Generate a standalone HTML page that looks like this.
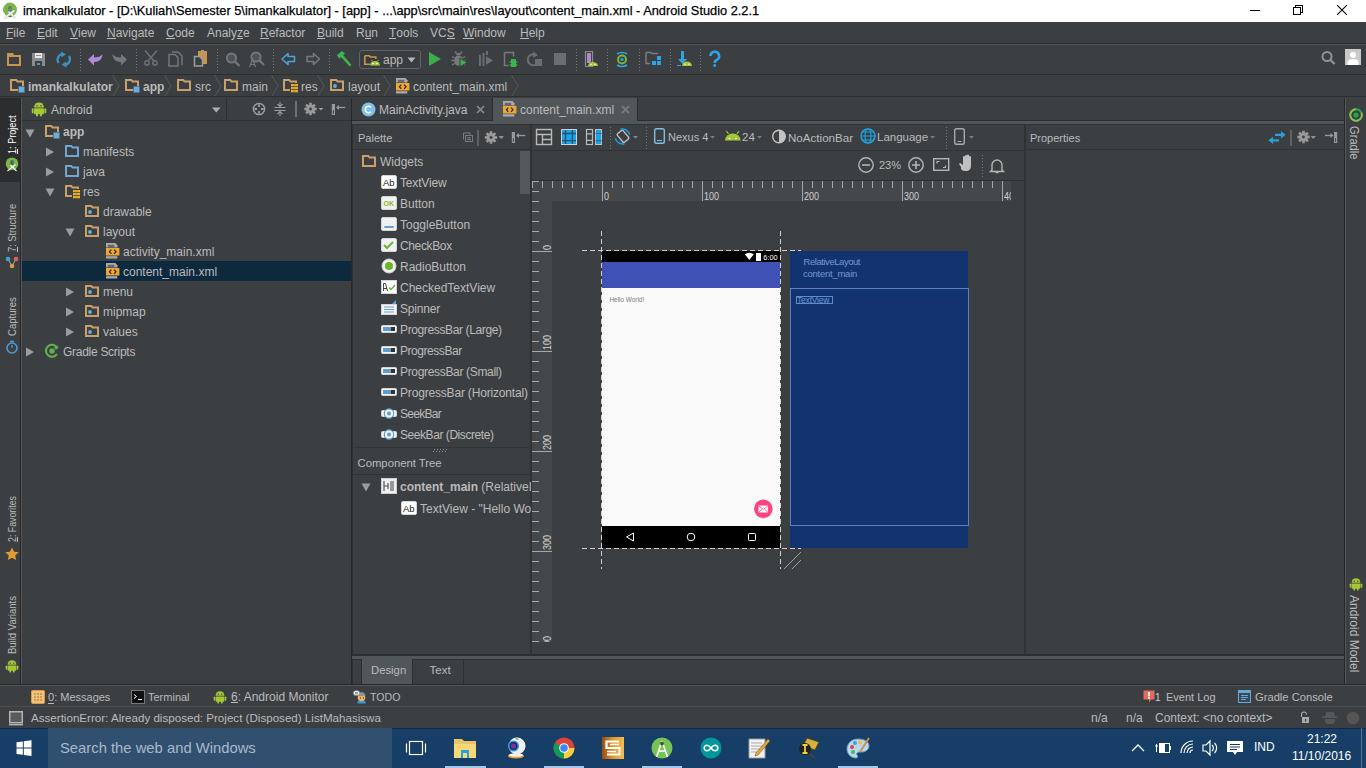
<!DOCTYPE html>
<html><head><meta charset="utf-8">
<style>
*{margin:0;padding:0;box-sizing:border-box}
html,body{width:1366px;height:768px;overflow:hidden;background:#3c3f41;font-family:"Liberation Sans",sans-serif;font-size:12px;color:#bbbbbb;position:relative}
.a{position:absolute}
.t{position:absolute;white-space:nowrap;line-height:1}
u{text-decoration:none;border-bottom:1px solid currentColor;display:inline-block;line-height:1;height:12px}
</style></head><body>
<svg width="0" height="0" style="position:absolute">
<defs>
<symbol id="fold" viewBox="0 0 16 16"><path d="M2 2h5.3l1.2 1.5H14V12H2z" fill="none" stroke="#c9a06a" stroke-width="2"/></symbol>
<symbol id="foldb" viewBox="0 0 16 16"><path d="M2 2h5.3l1.2 1.5H14V12H2z" fill="none" stroke="#6fa7d4" stroke-width="2"/></symbol>
<symbol id="foldmod" viewBox="0 0 16 16"><path d="M9 12H2V2h5.3l1.2 1.5H14V8" fill="none" stroke="#c9a06a" stroke-width="2"/><rect x="9.5" y="8.5" width="6" height="6" fill="#6aaed8"/></symbol>
<symbol id="folddot" viewBox="0 0 16 16"><path d="M2 2h5.3l1.2 1.5H14V12H2z" fill="none" stroke="#c9a06a" stroke-width="2"/><circle cx="6" cy="8" r="1.9" fill="#6aaed8"/></symbol>
<symbol id="foldres" viewBox="0 0 16 16"><path d="M8 12H2V2h5.3l1.2 1.5H14V5" fill="none" stroke="#c9a06a" stroke-width="2"/><path d="M9 6h7v2.2H9zM9 9h7v2.2H9zM9 12h7v2.2H9z" fill="#e9b52a"/><path d="M10.5 7h4M10.5 10h4M10.5 13h4" stroke="#b07c10" stroke-width=".6"/></symbol>
<symbol id="xml" viewBox="0 0 16 16"><path d="M0 0h9.3l2.2 2.2V4.6H0z" fill="#a9abad"/><rect x="1.8" y="1.8" width="6.5" height="2.8" fill="#3c3f41" opacity=".6"/><rect x="0" y="5" width="13.4" height="7.5" fill="#f0a732"/><path d="M5.3 6.6L3.4 8.75 5.3 10.9M8.1 6.6L10 8.75 8.1 10.9" fill="none" stroke="#2e2e2e" stroke-width="1.3"/><rect x="0" y="13.2" width="11.3" height="2.3" fill="#a9abad"/></symbol>
<symbol id="android" viewBox="0 0 16 16"><path d="M3 6.5a5 5 0 0 1 10 0z" fill="#a4c639"/><path d="M4.5 2.5l1.5 2M11.5 2.5l-1.5 2" stroke="#a4c639" stroke-width="1"/><rect x="3" y="7.3" width="10" height="6" rx="1" fill="#a4c639"/><rect x="0.8" y="7.3" width="1.8" height="5" rx=".9" fill="#a4c639"/><rect x="13.4" y="7.3" width="1.8" height="5" rx=".9" fill="#a4c639"/><rect x="5" y="12" width="2" height="3.5" rx="1" fill="#a4c639"/><rect x="9" y="12" width="2" height="3.5" rx="1" fill="#a4c639"/><circle cx="6" cy="4.8" r=".7" fill="#3c3f41"/><circle cx="10" cy="4.8" r=".7" fill="#3c3f41"/></symbol>
<symbol id="chev" viewBox="0 0 8 22"><path d="M0.5 0L7 11 0.5 22" fill="none" stroke="#555859" stroke-width="1"/></symbol>
<symbol id="tri-r" viewBox="0 0 10 10"><path d="M1 0.5v9l8-4.5z" fill="#9a9da0"/></symbol>
<symbol id="tri-d" viewBox="0 0 10 10"><path d="M0.5 1.5h9l-4.5 8z" fill="#9a9da0"/></symbol>
</defs>
</svg>
<!-- TITLE BAR -->
<div class="a" style="left:0;top:0;width:1366px;height:22px;background:#fff"></div>
<svg class="a" style="left:0;top:0" width="22" height="22" viewBox="0 0 22 22"><circle cx="10" cy="9.6" r="7" fill="#78b84a"/><path d="M6.5 15.5a5 3 0 0 0 7 0" stroke="#4e8a30" stroke-width="1.5" fill="none"/><path d="M14.3 10.6L4.3 18.3M8.6 11.4l6.6 6.9" stroke="#c8c8c8" stroke-width="2.2"/><path d="M14.3 10.6L4.3 18.3M8.6 11.4l6.6 6.9" stroke="#f6f6f6" stroke-width="1.2"/><rect x="8.2" y="6" width="3.6" height="5.5" rx="1.6" fill="#6b6e70"/><rect x="9.2" y="8.6" width="1.6" height="1.2" fill="#78b84a"/></svg>
<div class="t" style="left:23px;top:5px;font-size:12.8px;color:#000;-webkit-text-stroke:0.25px #000">imankalkulator - [D:\Kuliah\Semester 5\imankalkulator] - [app] - ...\app\src\main\res\layout\content_main.xml - Android Studio 2.2.1</div>
<div class="a" style="left:1250px;top:10px;width:10px;height:1px;background:#000"></div>
<div class="a" style="left:1295px;top:5px;width:8px;height:8px;border:1px solid #000;background:#fff"></div>
<div class="a" style="left:1293px;top:7px;width:8px;height:8px;border:1px solid #000;background:#fff"></div>
<svg class="a" style="left:1337px;top:5px" width="10" height="10" viewBox="0 0 10 10"><path d="M0 0L10 10M10 0L0 10" stroke="#000" stroke-width="1.05"/></svg>
<!-- MENU BAR -->
<div class="a" style="left:0;top:22px;width:1366px;height:22px;background:#3c3f41"></div>
<div class="t" style="left:6px;top:27px"><u>F</u>ile</div>
<div class="t" style="left:37px;top:27px"><u>E</u>dit</div>
<div class="t" style="left:70px;top:27px"><u>V</u>iew</div>
<div class="t" style="left:107px;top:27px"><u>N</u>avigate</div>
<div class="t" style="left:166px;top:27px"><u>C</u>ode</div>
<div class="t" style="left:207px;top:27px">Analy<u>z</u>e</div>
<div class="t" style="left:260px;top:27px"><u>R</u>efactor</div>
<div class="t" style="left:317px;top:27px"><u>B</u>uild</div>
<div class="t" style="left:356px;top:27px">R<u>u</u>n</div>
<div class="t" style="left:389px;top:27px"><u>T</u>ools</div>
<div class="t" style="left:430px;top:27px">VC<u>S</u></div>
<div class="t" style="left:463px;top:27px"><u>W</u>indow</div>
<div class="t" style="left:520px;top:27px"><u>H</u>elp</div>
<div class="a" style="left:0;top:43px;width:1366px;height:1px;background:#2a2a2a"></div><div class="a" style="left:0;top:44px;width:1366px;height:1px;background:#555555"></div>
<!-- TOOLBAR -->
<div class="a" style="left:0;top:74px;width:1366px;height:1px;background:#2c2e2f"></div>
<svg class="a" style="left:0;top:45px" width="1366" height="29" viewBox="0 45 1366 29">
<g fill="none">
<!-- open folder -->
<path d="M7 53h6l1 2h7v11H7z" fill="#c8924f"/><rect x="9" y="57" width="10" height="7" fill="#3c3f41"/>
<!-- save -->
<path d="M32 53h12l1 1v12H32z" fill="#8a8c8d"/><rect x="35" y="53" width="7" height="5" fill="#e8e8e8"/><rect x="36" y="55" width="5" height="1" fill="#8a8c8d"/><rect x="35" y="61" width="7" height="5" fill="#3c3f41"/><rect x="37" y="63" width="3" height="2" fill="#3a9bd7"/>
<!-- sync -->
<path d="M62.5 54.2A5.6 5.6 0 0 0 58.6 63" stroke="#3d8fc6" stroke-width="2.2"/><path d="M65 64.8A5.6 5.6 0 0 0 68.9 56" stroke="#3d8fc6" stroke-width="2.2"/><path d="M61 51.5l5 2.7-4.5 3.3z M66.5 67.5l-5-2.7 4.5-3.3z" fill="#3d8fc6"/>
<!-- separators -->
<g stroke="#75787a" stroke-width="1" stroke-dasharray="1 2"><path d="M80.5 49v22M136.5 49v22M217.5 49v22M273.5 49v22M329.5 49v22M576.5 49v22M607.5 49v22M639.5 49v22M670.5 49v22M700.5 49v22"/></g>
<!-- undo -->
<path d="M88 59.5l6-5.5v3.5c4 0 7-1 8.5-3.5c-0.3 5-3 8-8.5 8v3.5z" fill="#b18ad6"/>
<!-- redo -->
<path d="M88 59.5l6-5.5v3.5c4 0 7-1 8.5-3.5c-0.3 5-3 8-8.5 8v3.5z" fill="#76797b" transform="translate(215 0) scale(-1 1)"/>
<!-- cut -->
<g stroke="#6f7273" stroke-width="1.5"><circle cx="147" cy="63" r="2.2"/><circle cx="155" cy="63" r="2.2"/><path d="M145 50.5L154 61M157 50.5L148 61"/></g>
<!-- copy -->
<g stroke="#737677" stroke-width="1.5"><path d="M172 52h6l4 4v9M169 54.5h6l3 3v8.5h-9z"/></g>
<!-- paste -->
<path d="M198 51h9v13h-9z" fill="#c99450"/><rect x="201" y="50" width="3" height="2" fill="#9a9c9d"/><path d="M194.5 56.5h5l3 3v6.5h-8z" fill="#3c3f41" stroke="#9a9c9d" stroke-width="1.5"/>
<!-- find -->
<circle cx="231.5" cy="58" r="4.6" stroke="#747778" stroke-width="2" fill="#505354"/><path d="M235 61.5l4.5 4.5" stroke="#747778" stroke-width="2.4"/>
<!-- replace -->
<circle cx="256" cy="57" r="4.6" stroke="#747778" stroke-width="2" fill="#505354"/><path d="M259.5 60.5l4.5 4.5" stroke="#747778" stroke-width="2.4"/><path d="M249.5 67l3-8 3 8M250.5 64.5h4" stroke="#747778" stroke-width="1.2"/>
<!-- back -->
<path d="M282 59l6-5.5v3h6.5v5h-6.5v3z" stroke="#4ba3d9" stroke-width="1.6" stroke-linejoin="round"/>
<!-- forward -->
<path d="M319.5 59l-6-5.5v3H307v5h6.5v3z" stroke="#77797b" stroke-width="1.6" stroke-linejoin="round"/>
<!-- hammer -->
<path d="M337 55l5-4 3 2.5-2 1.5 8.5 10-1.8 1.5-8.7-9.5-2 1.8z" fill="#3eb34f"/>
<!-- run -->
<path d="M429 52v14l12-7z" fill="#3aae4a"/>
<!-- debug -->
<ellipse cx="458.5" cy="60.5" rx="4.3" ry="5.3" fill="#77797b"/><path d="M456 55a2.5 2.2 0 0 1 5 0z" fill="#77797b"/><path d="M455 51.5l1.5 2M462 51.5l-1.5 2M452 56.5l2.5 1.5M465 56.5l-2.5 1.5M451.5 60.5h3M462.5 60.5h3M452 65l2.5-1.5M465 65l-2.5-1.5" stroke="#77797b" stroke-width="1.3"/><path d="M459.5 57.5v10l8.5-5z" fill="#3c3f41"/><path d="M460.5 59v7l6-3.5z" fill="#3aae4a"/>
<!-- attach -->
<path d="M479 55h2v11h-2zM482.5 53h2v13h-2z" fill="#6b6e6f"/><path d="M486 56v9l7-4.5z" fill="#6b6e6f"/><rect x="486" y="51" width="2" height="4" fill="#6b6e6f"/>
<!-- device -->
<path d="M504.5 52.5h9v4M504.5 52.5v13h4" stroke="#77797b" stroke-width="1.5"/><path d="M511 59h5v2l2 1-2 1v1l2 1-2 1v1h-5v-1l-2-1 2-1v-1l-2-1 2-1z" fill="#38b34a"/>
<!-- rerun -->
<path d="M536 55a5.5 5.5 0 1 0 -1 10" stroke="#6b6e6f" stroke-width="2"/><path d="M533 51.5l5 3.5-5 3z" fill="#6b6e6f"/><rect x="535" y="59" width="7" height="7" fill="#6b6e6f"/>
<!-- stop -->
<rect x="554" y="53" width="12" height="12" fill="#6b6e6f"/>
<!-- AVD -->
<path d="M585.5 51.5h7v15h-7z" stroke="#8a8c8e" stroke-width="1.2"/><rect x="587" y="53" width="4" height="10" fill="#b287c4"/><path d="M588 66a5 4 0 0 1 10 0z" fill="#a4c639"/><circle cx="591" cy="64.5" r=".7" fill="#fff"/><circle cx="595" cy="64.5" r=".7" fill="#fff"/>
<!-- sync gradle -->
<path d="M617 54a7 5 0 0 1 10 0M627 65a7 5 0 0 1-10 0" stroke="#27a8e0" stroke-width="1.6"/><circle cx="622" cy="59.5" r="4" stroke="#7cb342" stroke-width="2"/><circle cx="622" cy="59.5" r="1.6" fill="#27a8e0"/>
<!-- project structure -->
<path d="M646 52.5h5l1 1h6M646 52.5v11h4" stroke="#77797b" stroke-width="1.6"/><rect x="657" y="56" width="4" height="4" fill="#28a7e6"/><rect x="652" y="61" width="4" height="4" fill="#28a7e6"/><rect x="657" y="61" width="4" height="4" fill="#28a7e6"/>
<!-- sdk -->
<path d="M681 51h3v8h3l-4.5 5-4.5-5h3z" fill="#2ea4de"/><rect x="677" y="65" width="4" height="1" fill="#2ea4de"/><path d="M682 66a5 4.5 0 0 1 10 0z" fill="#a4c639"/><circle cx="685" cy="64.2" r=".7" fill="#fff"/><circle cx="689" cy="64.2" r=".7" fill="#fff"/>
<!-- help -->
<path d="M710.5 56a4.3 4.3 0 1 1 6 4c-1.5 0.8-1.8 1.5-1.8 3" stroke="#2ea4e6" stroke-width="2.6"/><circle cx="714.7" cy="65.5" r="1.4" fill="#2ea4e6"/>
<!-- search right -->
<circle cx="1327" cy="56.5" r="4.5" stroke="#8f9294" stroke-width="2"/><path d="M1330.5 60l4 4" stroke="#8f9294" stroke-width="2.4"/>
<rect x="1345" y="49" width="16" height="16" fill="#c9c9c9"/><circle cx="1353" cy="55" r="3" fill="#fff"/><path d="M1347.5 65v-3c0-2 2-3 5.5-3s5.5 1 5.5 3v3z" fill="#fff"/>
</g>
</svg>
<!-- app dropdown -->
<div class="a" style="left:359px;top:50px;width:62px;height:19px;border:1px solid #616466;border-radius:3px;background:#3a3d3f"></div>
<svg class="a" style="left:364px;top:52px" width="16" height="16" viewBox="0 0 16 16"><path d="M0.8 3.8h4.5l1 1.2h5.5v2" stroke="#c99450" stroke-width="1.6" fill="none"/><path d="M0.8 3.8v8.5h5" stroke="#c99450" stroke-width="1.6" fill="none"/><path d="M6 13.5a5 4.5 0 0 1 10 0z" fill="#a4c639"/><circle cx="9" cy="11.5" r=".8" fill="#fff"/><circle cx="13" cy="11.5" r=".8" fill="#fff"/><path d="M7.5 8l1 1.5M14.5 8l-1 1.5" stroke="#a4c639"/></svg>
<div class="t" style="left:383px;top:54px;font-size:12px;color:#bbb">app</div>
<svg class="a" style="left:407px;top:57px" width="10" height="6" viewBox="0 0 10 6"><path d="M0.5 0.5h8l-4 5z" fill="#b5b5b5"/></svg>
<!-- NAV BAR -->
<svg class="a" style="left:9px;top:78px" width="16" height="16"><use href="#foldmod"/></svg>
<div class="t" style="left:28px;top:81px;font-weight:bold">imankalkulator</div>
<svg class="a" style="left:112px;top:75px" width="8" height="22"><use href="#chev"/></svg>
<svg class="a" style="left:124px;top:78px" width="16" height="16"><use href="#foldmod"/></svg>
<div class="t" style="left:143px;top:81px;font-weight:bold">app</div>
<svg class="a" style="left:164px;top:75px" width="8" height="22"><use href="#chev"/></svg>
<svg class="a" style="left:176px;top:78px" width="16" height="16"><use href="#fold"/></svg>
<div class="t" style="left:195px;top:81px">src</div>
<svg class="a" style="left:214px;top:75px" width="8" height="22"><use href="#chev"/></svg>
<svg class="a" style="left:223px;top:78px" width="16" height="16"><use href="#fold"/></svg>
<div class="t" style="left:242px;top:81px">main</div>
<svg class="a" style="left:271px;top:75px" width="8" height="22"><use href="#chev"/></svg>
<svg class="a" style="left:282px;top:78px" width="16" height="16"><use href="#foldres"/></svg>
<div class="t" style="left:301px;top:81px">res</div>
<svg class="a" style="left:317px;top:75px" width="8" height="22"><use href="#chev"/></svg>
<svg class="a" style="left:329px;top:78px" width="16" height="16"><use href="#folddot"/></svg>
<div class="t" style="left:348px;top:81px">layout</div>
<svg class="a" style="left:383px;top:75px" width="8" height="22"><use href="#chev"/></svg>
<svg class="a" style="left:396px;top:78px" width="16" height="16"><use href="#xml"/></svg>
<div class="t" style="left:413px;top:81px">content_main.xml</div>
<svg class="a" style="left:511px;top:75px" width="8" height="22"><use href="#chev"/></svg>
<div class="a" style="left:0;top:96px;width:1366px;height:1px;background:#2d2f30"></div>
<!-- LEFT STRIPE -->
<div class="a" style="left:0;top:98px;width:20px;height:84px;background:#2b2d2e"></div>
<div class="a" style="left:20px;top:98px;width:1px;height:586px;background:#282828"></div><div class="a" style="left:21px;top:98px;width:1px;height:586px;background:#555555"></div>
<div class="t" style="left:7px;top:154px;transform:rotate(-90deg) scaleX(0.828);transform-origin:0 0;color:#fff;font-size:11px"><span style="text-decoration:underline">1</span>: Project</div>
<svg class="a" style="left:5px;top:157px" width="14" height="15" viewBox="0 0 14 15"><circle cx="7" cy="6.8" r="6.3" fill="#78b84a"/><path d="M10.5 7.5L2.5 14M5.5 8l6 6" stroke="#f2f2f2" stroke-width="1.3"/><rect x="5.3" y="3" width="3.4" height="5" rx="1.5" fill="#5e6163"/></svg>
<div class="t" style="left:7px;top:251.5px;transform:rotate(-90deg) scaleX(0.845);transform-origin:0 0;color:#bbb;font-size:11px"><span style="text-decoration:underline">7</span>: Structure</div>
<svg class="a" style="left:5px;top:255px" width="14" height="14" viewBox="0 0 14 14"><path d="M3 4l4 7M11 4L7 11" stroke="#9aa" stroke-width="1"/><circle cx="3" cy="4" r="2.3" fill="#4a9cd6"/><circle cx="11" cy="4" r="2.3" fill="#e0605b"/><circle cx="7" cy="11" r="2.3" fill="#d89a4a"/></svg>
<div class="t" style="left:7px;top:336px;transform:rotate(-90deg) scaleX(0.868);transform-origin:0 0;color:#bbb;font-size:11px">Captures</div>
<svg class="a" style="left:5px;top:340px" width="14" height="14" viewBox="0 0 14 14"><circle cx="7" cy="8" r="5" fill="none" stroke="#4a9cd6" stroke-width="1.6"/><path d="M7 8V5M5 1.5h4" stroke="#4a9cd6" stroke-width="1.4"/></svg>
<div class="t" style="left:7px;top:542px;transform:rotate(-90deg) scaleX(0.800);transform-origin:0 0;color:#bbb;font-size:11px"><span style="text-decoration:underline">2</span>: Favorites</div>
<svg class="a" style="left:5px;top:547px" width="14" height="14" viewBox="0 0 14 14"><path d="M7 0.5l2 4.3 4.7.5-3.5 3.2 1 4.6L7 10.8 2.8 13.1l1-4.6L.3 5.3 5 4.8z" fill="#e39c34"/></svg>
<div class="t" style="left:7px;top:654px;transform:rotate(-90deg) scaleX(0.864);transform-origin:0 0;color:#bbb;font-size:11px">Build Variants</div>
<svg class="a" style="left:5px;top:659px" width="14" height="14"><use href="#android"/></svg>
<!-- PROJECT PANEL HEADER -->
<div class="a" style="left:22px;top:120px;width:330px;height:1px;background:#303234"></div>
<svg class="a" style="left:31px;top:101px" width="16" height="16"><use href="#android"/></svg>
<div class="t" style="left:51px;top:104px">Android</div>
<svg class="a" style="left:212px;top:107px" width="9" height="6" viewBox="0 0 9 6"><path d="M0 0.5h8.5l-4.25 5z" fill="#b0b0b0"/></svg>
<div class="a" style="left:226px;top:98px;width:1px;height:22px;background:#2e3031"></div>
<svg class="a" style="left:250px;top:101px" width="100" height="16" viewBox="250 101 100 16">
<g fill="none" stroke="#9c9fa1" stroke-width="1.4"><circle cx="259" cy="109" r="5.6" stroke-width="1.5"/><path d="M259 104.5v2.5M259 111v2.5M254.5 109h2.5M261 109h2.5" stroke-width="1.8"/><path d="M274.5 107.5h11M274.5 110.5h11M280 102v4M280 112v4" stroke-width="1.1"/><path d="M277.5 104l2.5 2.5 2.5-2.5M277.5 114l2.5-2.5 2.5 2.5" stroke-width="1.1"/></g>
<rect x="295" y="101" width="2" height="16" fill="#6e7173"/>
<circle cx="310.5" cy="109" r="4.4" fill="#9a9a9a"/><rect x="309.2" y="102.8" width="2.6" height="3" fill="#9a9a9a" transform="rotate(0 310.5 109)"/><rect x="309.2" y="102.8" width="2.6" height="3" fill="#9a9a9a" transform="rotate(45 310.5 109)"/><rect x="309.2" y="102.8" width="2.6" height="3" fill="#9a9a9a" transform="rotate(90 310.5 109)"/><rect x="309.2" y="102.8" width="2.6" height="3" fill="#9a9a9a" transform="rotate(135 310.5 109)"/><rect x="309.2" y="102.8" width="2.6" height="3" fill="#9a9a9a" transform="rotate(180 310.5 109)"/><rect x="309.2" y="102.8" width="2.6" height="3" fill="#9a9a9a" transform="rotate(225 310.5 109)"/><rect x="309.2" y="102.8" width="2.6" height="3" fill="#9a9a9a" transform="rotate(270 310.5 109)"/><rect x="309.2" y="102.8" width="2.6" height="3" fill="#9a9a9a" transform="rotate(315 310.5 109)"/><circle cx="310.5" cy="109" r="1.4" fill="#3c3f41"/><path d="M318.5 108h5l-2.5 2.5z" fill="#9c9fa1"/>
<rect x="331.8" y="104" width="3.2" height="11" fill="#9a9a9a"/><rect x="332.9" y="110.2" width="1" height="3.6" fill="#3c3f41"/><path d="M337 107.5h8.3" stroke="#9a9a9a" stroke-width="1.3"/><path d="M336 107.5l3-2.6v5.2z" fill="#9a9a9a"/>
</svg>
<!-- TREE -->
<div class="a" style="left:22px;top:261px;width:329px;height:20px;background:#0d293e"></div>
<svg class="a" style="left:25px;top:128px" width="10" height="10"><use href="#tri-d"/></svg>
<svg class="a" style="left:44px;top:124px" width="16" height="16"><use href="#foldmod"/></svg>
<div class="t" style="left:63px;top:126px;font-weight:bold">app</div>
<svg class="a" style="left:45px;top:147px" width="10" height="10"><use href="#tri-r"/></svg>
<svg class="a" style="left:64px;top:144px" width="16" height="16"><use href="#foldb"/></svg>
<div class="t" style="left:83px;top:146px">manifests</div>
<svg class="a" style="left:45px;top:167px" width="10" height="10"><use href="#tri-r"/></svg>
<svg class="a" style="left:64px;top:164px" width="16" height="16"><use href="#foldb"/></svg>
<div class="t" style="left:83px;top:166px">java</div>
<svg class="a" style="left:45px;top:187px" width="10" height="10"><use href="#tri-d"/></svg>
<svg class="a" style="left:64px;top:184px" width="16" height="16"><use href="#foldres"/></svg>
<div class="t" style="left:83px;top:186px">res</div>
<svg class="a" style="left:84px;top:204px" width="16" height="16"><use href="#folddot"/></svg>
<div class="t" style="left:103px;top:206px">drawable</div>
<svg class="a" style="left:65px;top:227px" width="10" height="10"><use href="#tri-d"/></svg>
<svg class="a" style="left:84px;top:224px" width="16" height="16"><use href="#folddot"/></svg>
<div class="t" style="left:103px;top:226px">layout</div>
<svg class="a" style="left:106px;top:243px" width="16" height="16"><use href="#xml"/></svg>
<div class="t" style="left:123px;top:246px">activity_main.xml</div>
<svg class="a" style="left:106px;top:263px" width="16" height="16"><use href="#xml"/></svg>
<div class="t" style="left:123px;top:266px">content_main.xml</div>
<svg class="a" style="left:65px;top:287px" width="10" height="10"><use href="#tri-r"/></svg>
<svg class="a" style="left:84px;top:284px" width="16" height="16"><use href="#folddot"/></svg>
<div class="t" style="left:103px;top:286px">menu</div>
<svg class="a" style="left:65px;top:307px" width="10" height="10"><use href="#tri-r"/></svg>
<svg class="a" style="left:84px;top:304px" width="16" height="16"><use href="#folddot"/></svg>
<div class="t" style="left:103px;top:306px">mipmap</div>
<svg class="a" style="left:65px;top:327px" width="10" height="10"><use href="#tri-r"/></svg>
<svg class="a" style="left:84px;top:324px" width="16" height="16"><use href="#folddot"/></svg>
<div class="t" style="left:103px;top:326px">values</div>
<svg class="a" style="left:25px;top:347px" width="10" height="10"><use href="#tri-r"/></svg>
<svg class="a" style="left:44px;top:343px" width="16" height="16" viewBox="0 0 16 16"><path d="M13.5 5.5A6 6 0 1 0 13 11" fill="none" stroke="#5fb04e" stroke-width="2.2"/><circle cx="8" cy="8" r="2.8" fill="#5fb04e"/><path d="M14.5 3l-2.5 4-2-3z" fill="#5fb04e"/></svg>
<div class="t" style="left:63px;top:346px;letter-spacing:-.28px">Gradle Scripts</div>
<div class="a" style="left:351px;top:98px;width:1px;height:588px;background:#282828"></div><div class="a" style="left:352px;top:98px;width:1px;height:588px;background:#303030"></div>
<!-- EDITOR TABS -->
<div class="a" style="left:352px;top:120px;width:992px;height:1px;background:#2a2c2d"></div>
<div class="a" style="left:352px;top:98px;width:141px;height:23px;background:#3b3e40;border-right:1px solid #2a2c2d;border-bottom:1px solid #2a2c2d"></div>
<div class="a" style="left:493px;top:98px;width:145px;height:23px;background:#515658;border-right:1px solid #2a2c2d"></div>
<div class="a" style="left:352px;top:121px;width:992px;height:3px;background:#515658"></div>
<div class="a" style="left:352px;top:124px;width:992px;height:1px;background:#303234"></div>
<svg class="a" style="left:361px;top:102px" width="15" height="15" viewBox="0 0 15 15"><circle cx="7.5" cy="7.5" r="7" fill="#7fc0e8"/><path d="M10 5.2A3.3 3.3 0 1 0 10 9.8" fill="none" stroke="#fff" stroke-width="1.6"/></svg>
<div class="t" style="left:379px;top:104px">MainActivity.java</div>
<svg class="a" style="left:476px;top:105px" width="9" height="9" viewBox="0 0 9 9"><path d="M1 1l7 7M8 1L1 8" stroke="#8a8c8e" stroke-width="1.6"/></svg>
<svg class="a" style="left:503px;top:101px" width="16" height="16"><use href="#xml"/></svg>
<div class="t" style="left:520px;top:104px">content_main.xml</div>
<svg class="a" style="left:621px;top:105px" width="9" height="9" viewBox="0 0 9 9"><path d="M1 1l7 7M8 1L1 8" stroke="#7d8082" stroke-width="1.6"/></svg>
<!-- PALETTE HEADER -->
<div class="t" style="left:358px;top:133px;font-size:11px">Palette</div>
<div class="a" style="left:352px;top:149px;width:179px;height:1px;background:#303234"></div>
<svg class="a" style="left:460px;top:128px" width="70" height="20" viewBox="460 128 70 20">
<g fill="none" stroke-width="1"><path d="M463.5 139.5v-6.5h6.5v1.5" stroke="#6d8394"/><rect x="465.5" y="135.5" width="7" height="6" stroke="#7a7a7a"/><path d="M467 137.8h4M467 139.6h4" stroke="#7a7a7a"/></g>
<rect x="477" y="130" width="2" height="16" fill="#5f6264"/>
<circle cx="491" cy="137.5" r="4.4" fill="#9a9a9a"/><rect x="489.7" y="131.3" width="2.6" height="3" fill="#9a9a9a" transform="rotate(0 491 137.5)"/><rect x="489.7" y="131.3" width="2.6" height="3" fill="#9a9a9a" transform="rotate(45 491 137.5)"/><rect x="489.7" y="131.3" width="2.6" height="3" fill="#9a9a9a" transform="rotate(90 491 137.5)"/><rect x="489.7" y="131.3" width="2.6" height="3" fill="#9a9a9a" transform="rotate(135 491 137.5)"/><rect x="489.7" y="131.3" width="2.6" height="3" fill="#9a9a9a" transform="rotate(180 491 137.5)"/><rect x="489.7" y="131.3" width="2.6" height="3" fill="#9a9a9a" transform="rotate(225 491 137.5)"/><rect x="489.7" y="131.3" width="2.6" height="3" fill="#9a9a9a" transform="rotate(270 491 137.5)"/><rect x="489.7" y="131.3" width="2.6" height="3" fill="#9a9a9a" transform="rotate(315 491 137.5)"/><circle cx="491" cy="137.5" r="1.4" fill="#3c3f41"/><path d="M498.5 136h5.5l-2.75 3z" fill="#8f9294"/>
<rect x="511.8" y="132" width="3.2" height="11" fill="#9a9a9a"/><rect x="512.9" y="138.2" width="1" height="3.6" fill="#3c3f41"/><path d="M517 135.5h8.3" stroke="#9a9a9a" stroke-width="1.3"/><path d="M516 135.5l3-2.6v5.2z" fill="#9a9a9a"/>
</svg>
<div class="a" style="left:530px;top:125px;width:2px;height:530px;background:#303234"></div>
<!-- DESIGN TOOLBAR -->
<div class="a" style="left:532px;top:150px;width:492px;height:1px;background:#303234"></div>
<div class="a" style="left:532px;top:180px;width:492px;height:1px;background:#2e3032"></div>
<svg class="a" style="left:532px;top:125px" width="492" height="56" viewBox="532 125 492 56">
<g fill="none">
<!-- design -->
<rect x="536.5" y="129.5" width="15" height="15" stroke="#b9b9b9" stroke-width="1.4"/><path d="M536.5 134.5h15M542.5 134.5v10M542.5 139.5h9" stroke="#b9b9b9" stroke-width="1.4"/>
<!-- blueprint -->
<rect x="561" y="129" width="16" height="16" fill="#1aa4e6"/><rect x="561.5" y="129.5" width="15" height="15" stroke="#d0d0d0" stroke-width="1"/><path d="M562 133.5h14M562 140.7h14M565.5 130v14M572.4 130v14" stroke="#2a4f73" stroke-width="1.3"/>
<!-- both -->
<rect x="586.5" y="129.5" width="6" height="15" stroke="#b9b9b9" stroke-width="1.2"/><path d="M586.5 133.8h6M586.5 140.3h6" stroke="#b9b9b9" stroke-width="1.2"/><rect x="595" y="129" width="7" height="16" fill="#1aa4e6"/><rect x="595.5" y="129.5" width="6" height="15" stroke="#c0c0c0" stroke-width="1"/><path d="M595.5 133.5h6M595.5 140.7h6" stroke="#2a6f9a" stroke-width="1.2"/>
<!-- seps -->
<path d="M610.5 127v22M646.5 127v22M946.5 127v22M982.5 155v22" stroke="#75787a" stroke-dasharray="1 2"/>
<!-- rotate -->
<rect x="619.3" y="130.8" width="7.4" height="11" rx="1.2" transform="rotate(-40 623 136.3)" stroke="#c4c4c4" stroke-width="1.3"/><path d="M620.6 129.3A7.5 7.5 0 0 1 629.7 134.6M624.4 143.7A7.5 7.5 0 0 1 615.3 138.4" stroke="#1aa4e6" stroke-width="1.5"/><path d="M633 136h5l-2.5 2.5z" fill="#8b8e90"/>
<!-- nexus phone -->
<rect x="654.7" y="128.7" width="9.6" height="14.6" rx="1.8" stroke="#7fbde6" stroke-width="1.4"/><path d="M657 140.5h5" stroke="#7fbde6"/>
<path d="M710 136h5l-2.5 2.5zM757 136h5l-2.5 2.5zM930 136h5l-2.5 2.5zM969 136h5l-2.5 2.5z" fill="#7d8082"/>
<!-- android 24 -->
<path d="M725 140.5a7.8 7 0 0 1 15.6 0z" fill="#a4c639"/><path d="M726.5 131l2 3M739 131l-2 3" stroke="#a4c639" stroke-width="1.2"/><circle cx="729.5" cy="138.5" r=".8" fill="#fff"/><circle cx="736" cy="138.5" r=".8" fill="#fff"/>
<!-- theme -->
<circle cx="779" cy="136.5" r="6.3" stroke="#c4c4c4" stroke-width="1.4"/><path d="M779 130.2a6.3 6.3 0 0 1 0 12.6z" fill="#c4c4c4"/>
<!-- globe -->
<circle cx="868" cy="136" r="7" stroke="#1fa3e4" stroke-width="1.5"/><ellipse cx="868" cy="136" rx="3" ry="7" stroke="#1fa3e4" stroke-width="1.2"/><path d="M861 136h14M862.5 132h11M862.5 140h11" stroke="#1fa3e4" stroke-width="1.2"/>
<!-- phone outline -->
<rect x="954.7" y="128.7" width="9.6" height="15.6" rx="1.8" stroke="#a9a9a9" stroke-width="1.4"/><path d="M957.5 141.5h4" stroke="#a9a9a9"/>
<!-- row2 -->
<circle cx="866" cy="165" r="7.2" stroke="#b5b5b5" stroke-width="1.4"/><path d="M862 165h8" stroke="#b5b5b5" stroke-width="1.6"/>
<circle cx="916" cy="165" r="7.2" stroke="#b5b5b5" stroke-width="1.4"/><path d="M912 165h8M916 161v8" stroke="#b5b5b5" stroke-width="1.6"/>
<rect x="933.7" y="158.7" width="15" height="11.6" stroke="#b5b5b5" stroke-width="1.4"/><path d="M937 163.5v-2h2.5M945.5 165.5v2H943" stroke="#b5b5b5" stroke-width="1.2"/>
<path d="M961 167l-2-3 1-1 3 2v-8a1 1 0 0 1 2 0v5-6a1 1 0 0 1 2 0v6-6.5a1 1 0 0 1 2 0v6.5-5a1 1 0 0 1 2 0v9c0 3-2 5-5 5h-1c-2 0-3-1-4-2z" fill="#c0c0c0"/>
<path d="M992 170v-5a5 5 0 0 1 10 0v5l1.5 1.5h-13z" stroke="#b5b5b5" stroke-width="1.4"/><path d="M995.5 172.5h3" stroke="#b5b5b5" stroke-width="1.4"/>
</g>
</svg>
<div class="t" style="left:668px;top:132px;font-size:11px">Nexus 4</div>
<div class="t" style="left:742px;top:132px;font-size:11.5px">24</div>
<div class="t" style="left:788px;top:131.5px;font-size:11.6px">NoActionBar</div>
<div class="t" style="left:877px;top:131.5px;font-size:11.5px">Language</div>
<div class="t" style="left:879px;top:160px;font-size:11px">23%</div>
<!-- RULERS -->
<div class="a" style="left:532px;top:181px;width:479px;height:20px;background:#45484a"></div>
<div class="a" style="left:532px;top:201px;width:20px;height:441px;background:#45484a"></div>
<svg class="a" style="left:532px;top:181px" width="492" height="474" viewBox="532 181 492 474">
<path d="M532.5 181v7M532 181.5h7M542.5 181v7M552.5 181v7M562.5 181v7M572.5 181v7M582.5 181v7M592.5 181v7M602.5 181v20M612.5 181v7M622.5 181v7M632.5 181v7M642.5 181v7M652.5 181v7M662.5 181v7M672.5 181v7M682.5 181v7M692.5 181v7M702.5 181v20M712.5 181v7M722.5 181v7M732.5 181v7M742.5 181v7M752.5 181v7M762.5 181v7M772.5 181v7M782.5 181v7M792.5 181v7M802.5 181v20M812.5 181v7M822.5 181v7M832.5 181v7M842.5 181v7M852.5 181v7M862.5 181v7M872.5 181v7M882.5 181v7M892.5 181v7M902.5 181v20M912.5 181v7M922.5 181v7M932.5 181v7M942.5 181v7M952.5 181v7M962.5 181v7M972.5 181v7M982.5 181v7M992.5 181v7M1002.5 181v20M532 191.5h7M532 201.5h7M532 211.5h7M532 221.5h7M532 231.5h7M532 241.5h7M532 251.5h20M532 261.5h7M532 271.5h7M532 281.5h7M532 291.5h7M532 301.5h7M532 311.5h7M532 321.5h7M532 331.5h7M532 341.5h7M532 351.5h20M532 361.5h7M532 371.5h7M532 381.5h7M532 391.5h7M532 401.5h7M532 411.5h7M532 421.5h7M532 431.5h7M532 441.5h7M532 451.5h20M532 461.5h7M532 471.5h7M532 481.5h7M532 491.5h7M532 501.5h7M532 511.5h7M532 521.5h7M532 531.5h7M532 541.5h7M532 551.5h20M532 561.5h7M532 571.5h7M532 581.5h7M532 591.5h7M532 601.5h7M532 611.5h7M532 621.5h7M532 631.5h7M532 641.5h7" stroke="#a5a8aa" stroke-width="1" fill="none"/>
<g fill="#d0d0d0" font-family="Liberation Sans" font-size="10"><text x="604" y="200" textLength="5" lengthAdjust="spacingAndGlyphs">0</text><text x="704" y="200" textLength="15" lengthAdjust="spacingAndGlyphs">100</text><text x="804" y="200" textLength="15" lengthAdjust="spacingAndGlyphs">200</text><text x="904" y="200" textLength="15" lengthAdjust="spacingAndGlyphs">300</text><text x="1004" y="200" textLength="10" lengthAdjust="spacingAndGlyphs">40</text></g>
<g fill="#d0d0d0" font-family="Liberation Sans" font-size="10"><text transform="translate(551 250) rotate(-90)" textLength="5" lengthAdjust="spacingAndGlyphs">0</text><text transform="translate(551 350) rotate(-90)" textLength="15" lengthAdjust="spacingAndGlyphs">100</text><text transform="translate(551 450) rotate(-90)" textLength="15" lengthAdjust="spacingAndGlyphs">200</text><text transform="translate(551 550) rotate(-90)" textLength="15" lengthAdjust="spacingAndGlyphs">300</text><text transform="translate(551 651) rotate(-90)" textLength="15" lengthAdjust="spacingAndGlyphs">400</text></g>
<rect x="532" y="642" width="20" height="13" fill="#3c3f41"/><rect x="1011" y="181" width="13" height="21" fill="#3c3f41"/>
<!-- dashed guides -->
<g stroke="#d0d0d0" stroke-width="1" stroke-dasharray="5 3" fill="none"><path d="M582 250.5h219M582 548.5h219M601.5 231v338M780.5 231v338"/></g>
<!-- resize handle -->
<path d="M784 569l17-17M792 569l9-9" stroke="#a0a3a5" stroke-width="1"/>
</svg>
<!-- PHONE -->
<div class="a" style="left:602px;top:251px;width:178px;height:11px;background:#000"></div>
<div class="a" style="left:602px;top:262px;width:178px;height:26px;background:#3f51b5"></div>
<div class="a" style="left:602px;top:288px;width:178px;height:238px;background:#fafafa"></div>
<div class="a" style="left:602px;top:526px;width:178px;height:22px;background:#000"></div>
<svg class="a" style="left:602px;top:251px" width="178" height="297" viewBox="602 251 178 297">
<path d="M744.8 254.3a7 7 0 0 1 9 0l-4.5 5.7z" fill="#fff"/><rect x="756" y="253" width="5" height="8" rx=".6" fill="#fff"/>
<text x="763.3" y="259.8" fill="#fff" font-family="Liberation Sans" font-size="7.3">6:00</text>
<text x="609.5" y="302" fill="#7a7a7a" font-family="Liberation Sans" font-size="6.4">Hello World!</text>
<circle cx="763.5" cy="509.5" r="9.3" fill="#5a5a5a" opacity=".25"/><circle cx="763.3" cy="508.8" r="9.2" fill="#ff4081"/><rect x="758.5" y="505.5" width="9.6" height="7" fill="#fff"/><path d="M758.5 505.8l4.8 3.6 4.8-3.6M758.5 512.3l3.5-3M768 512.3l-3.5-3" fill="none" stroke="#ff4081" stroke-width=".8"/>
<path d="M633.5 533v8l-7-4z" fill="none" stroke="#fff" stroke-width="1"/><circle cx="691" cy="537" r="3.8" fill="none" stroke="#fff" stroke-width="1"/><rect x="748.5" y="533.5" width="7" height="7" rx=".8" fill="none" stroke="#fff" stroke-width="1"/>
</svg>
<!-- BLUEPRINT -->
<div class="a" style="left:790px;top:251px;width:178px;height:297px;background:#133370"></div>
<div class="a" style="left:790px;top:288px;width:179px;height:238px;border:1px solid #5683c1"></div>
<div class="t" style="left:803.5px;top:257px;font-size:9.5px;color:#7099d2;letter-spacing:-.45px">RelativeLayout</div>
<div class="t" style="left:803px;top:268.5px;font-size:9.5px;color:#7099d2;letter-spacing:-.25px">content_main</div>
<div class="a" style="left:796px;top:296px;width:37px;height:8px;border:1px solid #5d8ccc"></div>
<div class="t" style="left:797px;top:296px;font-size:8.5px;color:#6c94cf;letter-spacing:-.2px">TextView</div>
<!-- PALETTE LIST -->
<div class="a" style="left:520px;top:151px;width:10px;height:43px;background:#55585a"></div>
<svg class="a" style="left:361px;top:154px" width="16" height="16"><use href="#fold"/></svg>
<div class="t" style="left:380px;top:156px">Widgets</div>
<svg class="a" style="left:380px;top:172px" width="150" height="272" viewBox="380 172 150 272">
<g>
<rect x="381.5" y="175.5" width="15" height="13" rx="1.5" fill="#fff" stroke="#d5d5d5"/><text x="383" y="186" font-family="Liberation Sans" font-size="9.5" fill="#222">Ab</text>
<rect x="381.5" y="196.5" width="15" height="13" rx="1.5" fill="#f1f1f1" stroke="#d5d5d5"/><text x="383.5" y="206" font-family="Liberation Sans" font-size="7" font-weight="bold" fill="#8bbd2a">OK</text>
<rect x="381.5" y="217.5" width="15" height="13" rx="1.5" fill="#f1f1f1" stroke="#d5d5d5"/><rect x="384" y="226" width="10" height="2" rx="1" fill="#6b9ed0"/>
<rect x="381.5" y="238.5" width="15" height="13" rx="1.5" fill="#f1f1f1" stroke="#d5d5d5"/><path d="M384 245l3 3 6-6" fill="none" stroke="#6bb33a" stroke-width="2"/>
<circle cx="389" cy="266" r="7" fill="#f1f1f1" stroke="#d5d5d5"/><circle cx="389" cy="266" r="4" fill="#6bb52a"/>
<rect x="381.5" y="280.5" width="15" height="13" fill="#fff" stroke="#d5d5d5"/><path d="M383.5 291v-7.5l2 0 2 7.5M384 288.5h3" fill="none" stroke="#333" stroke-width=".9"/><path d="M389 287.5l2 2 4-4.5" fill="none" stroke="#6bb33a" stroke-width="1.5"/>
<path d="M392 304l4-4v4z" fill="#5da1d8"/><rect x="381.5" y="304.5" width="15" height="10" fill="#f4f4f4" stroke="#d5d5d5"/><path d="M384 307h10M384 309.5h10M384 312h10" stroke="#6b9ed0" stroke-width="1.2"/>
<g fill="#f4f4f4" stroke="#d5d5d5"><rect x="381.5" y="325.5" width="15" height="7" rx="1"/><rect x="381.5" y="346.5" width="15" height="7" rx="1"/><rect x="381.5" y="367.5" width="15" height="7" rx="1"/><rect x="381.5" y="388.5" width="15" height="7" rx="1"/></g>
<g fill="#5f9ccf"><rect x="383" y="327" width="8" height="4"/><rect x="383" y="348" width="8" height="4"/><rect x="383" y="369" width="8" height="4"/><rect x="383" y="390" width="8" height="4"/></g>
<g fill="#333"><rect x="391" y="327" width="4" height="4"/><rect x="391" y="348" width="4" height="4"/><rect x="391" y="369" width="4" height="4"/><rect x="391" y="390" width="4" height="4"/></g>
<g><rect x="381.5" y="410.5" width="15" height="6" rx="1" fill="#f4f4f4" stroke="#d5d5d5"/><circle cx="389" cy="413.5" r="4.7" fill="#f4f4f4" stroke="#5f9ccf" stroke-width="1.2"/><circle cx="389" cy="413.5" r="2" fill="#5f9ccf"/>
<rect x="381.5" y="431.5" width="15" height="6" rx="1" fill="#f4f4f4" stroke="#d5d5d5"/><circle cx="389" cy="434.5" r="4.7" fill="#f4f4f4" stroke="#5f9ccf" stroke-width="1.2"/><circle cx="389" cy="434.5" r="2" fill="#5f9ccf"/></g>
</g>
</svg>
<div class="t" style="left:400px;top:177px;letter-spacing:-0.17px">TextView</div>
<div class="t" style="left:400px;top:198px">Button</div>
<div class="t" style="left:400px;top:219px">ToggleButton</div>
<div class="t" style="left:400px;top:240px;letter-spacing:-0.36px">CheckBox</div>
<div class="t" style="left:400px;top:261px">RadioButton</div>
<div class="t" style="left:400px;top:282px">CheckedTextView</div>
<div class="t" style="left:400px;top:303px;letter-spacing:-0.20px">Spinner</div>
<div class="t" style="left:400px;top:324px;letter-spacing:-0.37px">ProgressBar (Large)</div>
<div class="t" style="left:400px;top:345px;letter-spacing:-0.45px">ProgressBar</div>
<div class="t" style="left:400px;top:366px;letter-spacing:-0.33px">ProgressBar (Small)</div>
<div class="t" style="left:400px;top:387px;letter-spacing:-.18px">ProgressBar (Horizontal)</div>
<div class="t" style="left:400px;top:408px;letter-spacing:-0.71px">SeekBar</div>
<div class="t" style="left:400px;top:429px;letter-spacing:-0.44px">SeekBar (Discrete)</div>
<!-- splitter + component tree -->
<div class="a" style="left:352px;top:447px;width:179px;height:1px;background:#333537"></div>
<svg class="a" style="left:433px;top:448px" width="16" height="5" viewBox="0 0 16 5"><g fill="#8a8c8e"><rect x="1" y="1" width="1" height="1"/><rect x="4" y="1" width="1" height="1"/><rect x="7" y="1" width="1" height="1"/><rect x="10" y="1" width="1" height="1"/><rect x="13" y="1" width="1" height="1"/><rect x="0" y="3" width="1" height="1"/><rect x="3" y="3" width="1" height="1"/><rect x="6" y="3" width="1" height="1"/><rect x="9" y="3" width="1" height="1"/><rect x="12" y="3" width="1" height="1"/></g></svg>
<div class="t" style="left:357.5px;top:458px;font-size:11.3px">Component Tree</div>
<div class="a" style="left:352px;top:474px;width:179px;height:1px;background:#303234"></div>
<svg class="a" style="left:361px;top:482px" width="10" height="10"><use href="#tri-d"/></svg>
<svg class="a" style="left:381px;top:478px" width="16" height="16" viewBox="0 0 16 16"><rect x="0.5" y="0.5" width="15" height="15" fill="#f0f0f0" stroke="#d0d0d0"/><path d="M3 3v10M3 8h4M7 5v6" stroke="#555" stroke-width="1.2"/><rect x="9" y="3" width="4" height="10" fill="#999"/></svg>
<div class="a" style="left:400px;top:481px;width:131px;height:14px;overflow:hidden"><span class="t" style="left:0;top:0"><b>content_main</b> (RelativeLayout)</span></div>
<svg class="a" style="left:401px;top:501px" width="16" height="14" viewBox="0 0 16 14"><rect x="0.5" y="0.5" width="15" height="13" rx="1.5" fill="#fff" stroke="#d5d5d5"/><text x="2" y="11" font-family="Liberation Sans" font-size="9.5" fill="#222">Ab</text></svg>
<div class="a" style="left:420px;top:503px;width:111px;height:14px;overflow:hidden"><span class="t" style="left:0;top:0">TextView - "Hello World!"</span></div>
<!-- bottom of designer -->
<div class="a" style="left:352px;top:654px;width:992px;height:2px;background:#2c2e2f"></div>
<div class="a" style="left:352px;top:656px;width:992px;height:3px;background:#515658"></div>
<div class="a" style="left:352px;top:659px;width:992px;height:1px;background:#2c2e2f"></div>
<div class="a" style="left:362px;top:658px;width:50px;height:26px;background:#515658"></div>
<div class="a" style="left:361px;top:659px;width:1px;height:25px;background:#2c2e2f"></div>
<div class="a" style="left:412px;top:659px;width:1px;height:25px;background:#2c2e2f"></div>
<div class="a" style="left:463px;top:659px;width:1px;height:25px;background:#2c2e2f"></div>
<div class="t" style="left:371px;top:665px;font-size:11.3px">Design</div>
<div class="t" style="left:429.5px;top:665px;font-size:11.5px">Text</div>
<!-- PROPERTIES -->
<div class="a" style="left:1024px;top:125px;width:2px;height:529px;background:#303234"></div>
<div class="t" style="left:1030px;top:133px;font-size:11px">Properties</div>
<div class="a" style="left:1026px;top:149px;width:318px;height:1px;background:#303234"></div>
<svg class="a" style="left:1265px;top:128px" width="78" height="20" viewBox="1265 128 78 20">
<path d="M1275 134.8h7M1279 140.3h-7" stroke="#27a3dc" stroke-width="2.2"/><path d="M1281 131.2l4.6 3.6-4.6 3.6zM1273 136.7l-4.6 3.6 4.6 3.6z" fill="#27a3dc"/>
<rect x="1290" y="130" width="2" height="16" fill="#5f6264"/>
<circle cx="1303.5" cy="137" r="4.4" fill="#9a9a9a"/><rect x="1302.2" y="130.8" width="2.6" height="3" fill="#9a9a9a" transform="rotate(0 1303.5 137)"/><rect x="1302.2" y="130.8" width="2.6" height="3" fill="#9a9a9a" transform="rotate(45 1303.5 137)"/><rect x="1302.2" y="130.8" width="2.6" height="3" fill="#9a9a9a" transform="rotate(90 1303.5 137)"/><rect x="1302.2" y="130.8" width="2.6" height="3" fill="#9a9a9a" transform="rotate(135 1303.5 137)"/><rect x="1302.2" y="130.8" width="2.6" height="3" fill="#9a9a9a" transform="rotate(180 1303.5 137)"/><rect x="1302.2" y="130.8" width="2.6" height="3" fill="#9a9a9a" transform="rotate(225 1303.5 137)"/><rect x="1302.2" y="130.8" width="2.6" height="3" fill="#9a9a9a" transform="rotate(270 1303.5 137)"/><rect x="1302.2" y="130.8" width="2.6" height="3" fill="#9a9a9a" transform="rotate(315 1303.5 137)"/><circle cx="1303.5" cy="137" r="1.4" fill="#3c3f41"/><path d="M1310.5 136h5.5l-2.75 3z" fill="#8f9294"/>
<path d="M1325 135.5h6.5" stroke="#9a9a9a" stroke-width="1.3"/><path d="M1333.5 135.5l-3-2.6v5.2z" fill="#9a9a9a"/><rect x="1334" y="132" width="3.2" height="11" fill="#9a9a9a"/><rect x="1335.1" y="138.2" width="1" height="3.6" fill="#3c3f41"/>
</svg>
<!-- RIGHT STRIPE -->
<div class="a" style="left:1344px;top:98px;width:1px;height:588px;background:#282828"></div><div class="a" style="left:1345px;top:98px;width:1px;height:588px;background:#555555"></div>
<svg class="a" style="left:1349px;top:108px" width="14" height="14" viewBox="0 0 14 14"><path d="M12.3 4.5A5.8 5.8 0 1 1 7 1.2" fill="none" stroke="#8bc34a" stroke-width="2"/><path d="M7 1.2a5.8 5.8 0 0 1 5.3 3.3" fill="none" stroke="#1fa84f" stroke-width="2"/><circle cx="7" cy="7" r="2.6" fill="#1fa84f"/></svg>
<div class="t" style="left:1360px;top:126px;transform:rotate(90deg) scaleX(0.93);transform-origin:0 0;font-size:12px">Gradle</div>
<svg class="a" style="left:1349px;top:577px" width="14" height="14"><use href="#android"/></svg>
<div class="t" style="left:1360px;top:595px;transform:rotate(90deg);transform-origin:0 0;font-size:12px">Android Model</div>
<!-- BOTTOM TOOL BAR -->
<div class="a" style="left:0;top:684px;width:1366px;height:1px;background:#2a2a2a"></div><div class="a" style="left:0;top:685px;width:1366px;height:1px;background:#555555"></div>
<svg class="a" style="left:31px;top:690px" width="14" height="14" viewBox="0 0 14 14"><rect x="0.5" y="0.5" width="13" height="13" rx="1" fill="#f3c27a" stroke="#d89a42"/><path d="M3 4h8M3 7h8M3 10h8" stroke="#a9763a" stroke-width="1.2" stroke-dasharray="2 1"/></svg>
<div class="t" style="left:48px;top:692px;font-size:11px"><u>0</u>: Messages</div>
<svg class="a" style="left:131px;top:690px" width="14" height="14" viewBox="0 0 14 14"><rect x="0.5" y="0.5" width="13" height="13" fill="#111" stroke="#777"/><path d="M3 4.5l2.5 2-2.5 2" fill="none" stroke="#fff" stroke-width="1"/><path d="M7 9.5h4" stroke="#fff"/></svg>
<div class="t" style="left:148px;top:692px;font-size:11px">Terminal</div>
<svg class="a" style="left:213px;top:690px" width="14" height="14"><use href="#android"/></svg>
<div class="t" style="left:231px;top:691px"><u>6</u>: Android Monitor</div>
<svg class="a" style="left:353px;top:690px" width="15" height="14" viewBox="0 0 15 14"><path d="M4.5 13.5v-1.5c0-1 1-1.6 3-1.6h2c2 0 3 .6 3 1.6v1.5z" fill="#2d9ae0"/><circle cx="8.5" cy="7.5" r="3.8" fill="#f0b060"/><path d="M4.6 7a4 3.6 0 0 1 7.8-1.6V5.2A4 4 0 0 0 4.6 5z" fill="#8f949a"/><path d="M4.7 6.5a4 4 0 0 1 7.7-1.5L12.5 6H4.7z" fill="#8f949a"/><rect x="7" y="7.5" width="1" height="1" fill="#333"/><rect x="10" y="7.5" width="1" height="1" fill="#333"/><ellipse cx="3.5" cy="3" rx="3.3" ry="2.6" fill="#fff" stroke="#666" stroke-width=".6"/><path d="M2 2.5h3M2 3.8h3" stroke="#555" stroke-width=".7"/></svg>
<div class="t" style="left:370px;top:692px;font-size:10.6px">TODO</div>
<svg class="a" style="left:1142px;top:689px" width="16" height="16" viewBox="0 0 16 16"><path d="M1.5 1.5h11v9H9l-2 3v-3H1.5z" fill="#e06b5e"/><path d="M7 3v4.5" stroke="#fff" stroke-width="1.6"/><circle cx="7" cy="9" r=".9" fill="#fff"/></svg><div class="t" style="left:1155px;top:693px;font-size:10px;color:#d0d0d0">1</div>
<div class="t" style="left:1166px;top:692px;font-size:11px">Event Log</div>
<svg class="a" style="left:1238px;top:690px" width="13" height="13" viewBox="0 0 13 13"><rect x="0.5" y="0.5" width="12" height="12" fill="#364a5a" stroke="#6aa6d6"/><rect x="1" y="1" width="11" height="2" fill="#6aa6d6"/><path d="M3 5.5h7M3 7.5h7M3 9.5h5" stroke="#6aa6d6"/></svg>
<div class="t" style="left:1255px;top:692px;font-size:11.2px">Gradle Console</div>
<div class="a" style="left:0;top:706px;width:1366px;height:1px;background:#4a4c4e"></div>
<!-- STATUS BAR -->
<svg class="a" style="left:9px;top:711px" width="14" height="15" viewBox="0 0 14 15"><rect x="0.75" y="0.75" width="12.5" height="11" fill="#5a5a5a" stroke="#b5b5b5" stroke-width="1.5"/><rect x="0" y="13" width="14" height="1.4" fill="#b5b5b5"/></svg>
<div class="t" style="left:31px;top:712px;font-size:11.6px">AssertionError: Already disposed: Project (Disposed) ListMahasiswa</div>
<div class="t" style="left:1091px;top:712px">n/a</div>
<div class="t" style="left:1126px;top:712px">n/a</div>
<div class="t" style="left:1155px;top:712px">Context: &lt;no context&gt;</div>
<svg class="a" style="left:1298px;top:711px" width="64" height="14" viewBox="1298 711 64 14">
<path d="M1301.5 717v-2.5a2.5 2.5 0 0 1 5 0" fill="none" stroke="#aaa" stroke-width="1.1"/><rect x="1302" y="717" width="7" height="6" fill="#aaa"/><rect x="1305" y="719" width="1.2" height="2.5" fill="#3c3f41"/>
<path d="M1325 716.5l1.2-4.5h7.6l1.2 4.5zM1322.5 716.5h15v1.6h-15zM1325 719h10v2.5l-2 2.5h-6l-2-2.5z" fill="#54585b"/>
<circle cx="1353" cy="718" r="6.3" fill="#555"/>
</svg>
<!-- TASKBAR -->
<div class="a" style="left:0;top:728px;width:1366px;height:40px;background:#163e66"></div><div class="a" style="left:0;top:728px;width:1366px;height:1px;background:#0d2a4a"></div>
<div class="a" style="left:48px;top:728px;width:344px;height:40px;background:#31506f"></div>
<svg class="a" style="left:16px;top:740px" width="16" height="16" viewBox="0 0 16 16"><path d="M0.5 2.3l6.3-.9v6.2H.5zM7.8 1.3L15.5 0.2v7.4H7.8zM.5 8.6h6.3v6.2l-6.3-.9zM7.8 8.6h7.7v7.4l-7.7-1.1z" fill="#fff"/></svg>
<div class="t" style="left:60px;top:741px;font-size:14.8px;color:#a9b9c9">Search the web and Windows</div>
<svg class="a" style="left:404px;top:738px" width="24" height="20" viewBox="0 0 24 20"><rect x="5.5" y="3.5" width="13" height="13" fill="none" stroke="#fff" stroke-width="1.2"/><path d="M2.5 5.5v9M21.5 5.5v9" stroke="#fff" stroke-width="1.2"/></svg>
<!-- explorer -->
<svg class="a" style="left:453px;top:737px" width="24" height="22" viewBox="0 0 24 22"><path d="M1 2h8l2 2h12v17H1z" fill="#e9c46a"/><path d="M1 7h22v14H1z" fill="#f8d775"/><path d="M8 13h8v8H8z" fill="#1fa2e4"/><path d="M10 16h4v5h-4z" fill="#f8d775"/></svg>
<div class="a" style="left:445px;top:766px;width:41px;height:2px;background:#a4c8e8"></div>
<!-- webcam -->
<svg class="a" style="left:505px;top:736px" width="22" height="24" viewBox="0 0 22 24"><ellipse cx="11" cy="20" rx="8" ry="2.5" fill="#f0a030"/><ellipse cx="11" cy="19" rx="7" ry="1.8" fill="#f4f4f4"/><circle cx="12" cy="10" r="8.5" fill="#eef0f4"/><circle cx="8.5" cy="10" r="5.5" fill="#2a9ad8"/><circle cx="8.5" cy="10" r="4" fill="#1c2a6a"/><circle cx="8.5" cy="10" r="2.6" fill="#8a2a9a"/><circle cx="12" cy="2.5" r="1.5" fill="#9aa"/></svg>
<!-- chrome -->
<svg class="a" style="left:553px;top:737px" width="22" height="22" viewBox="0 0 22 22"><circle cx="11" cy="11" r="10.5" fill="#db4437"/><path d="M11 11L1.9 5.8A10.5 10.5 0 0 0 11 21.5z" fill="#0f9d58"/><path d="M11 11h10.5A10.5 10.5 0 0 1 11 21.5z" fill="#ffcd40"/><circle cx="11" cy="11" r="4.8" fill="#fff"/><circle cx="11" cy="11" r="3.8" fill="#4285f4"/></svg>
<div class="a" style="left:544px;top:766px;width:40px;height:2px;background:#a4c8e8"></div>
<!-- sublime -->
<svg class="a" style="left:602px;top:737px" width="22" height="22" viewBox="0 0 22 22"><defs><linearGradient id="subg" x1="0" x2="1" y1="0" y2="0"><stop offset="0" stop-color="#9a4a10"/><stop offset=".5" stop-color="#e09a30"/><stop offset="1" stop-color="#f0c050"/></linearGradient></defs><rect x="0" y="0" width="22" height="22" fill="url(#subg)"/><path d="M17 4.5H4.5v6.5h13v6.5H5" fill="none" stroke="#fff" stroke-width="2.2"/><path d="M8 7.5h9M5 14.5h9" stroke="#fff" stroke-width="1.4"/></svg>
<!-- android studio -->
<svg class="a" style="left:651px;top:737px" width="22" height="22" viewBox="0 0 22 22"><circle cx="11" cy="11" r="10.5" fill="#78c257"/><path d="M11 4l-5.5 16M11 4l5.5 16M7.5 14h7" stroke="#fff" stroke-width="1.6" fill="none"/><circle cx="11" cy="6.5" r="2" fill="#3b5f2b"/></svg>
<div class="a" style="left:642px;top:766px;width:40px;height:2px;background:#a4c8e8"></div>
<!-- arduino -->
<svg class="a" style="left:700px;top:737px" width="22" height="22" viewBox="0 0 22 22"><circle cx="11" cy="11" r="10.5" fill="#00979c"/><path d="M7 8.2a2.8 2.8 0 1 0 0 5.6c2 0 3-1.6 4-2.8s2-2.8 4-2.8a2.8 2.8 0 1 1 0 5.6c-2 0-3-1.6-4-2.8S9 8.2 7 8.2z" fill="none" stroke="#fff" stroke-width="1.5"/></svg>
<!-- notepad -->
<svg class="a" style="left:748px;top:736px" width="23" height="23" viewBox="0 0 23 23"><path d="M1 3h16v19H1z" fill="#f2f2f2" stroke="#999"/><path d="M3 7h11M3 10h11M3 13h11M3 16h9" stroke="#aaa"/><path d="M8 17l12-14 2 2-12 14-3 1z" fill="#e8a838" stroke="#7a5a20" stroke-width=".6"/></svg>
<!-- some icon -->
<svg class="a" style="left:797px;top:736px" width="26" height="24" viewBox="0 0 26 24"><path d="M10 2l12 4-4 8-12-4z" fill="#d6b33a" stroke="#5a4a10"/><circle cx="8" cy="13" r="6" fill="#222"/><path d="M5.5 9h5M8 9v8M5.5 17h5" stroke="#f0d040" stroke-width="1.8"/><path d="M13 18l5 4" stroke="#444" stroke-width="2"/></svg>
<!-- paint -->
<svg class="a" style="left:846px;top:736px" width="25" height="23" viewBox="0 0 25 23"><path d="M12 3C5 3 1 8 1 13s4 9 9 9c2 0 2-2 1-3s0-3 2-3h3c4 0 7-3 7-6 0-4-4-7-11-7z" fill="#b8d8f0" stroke="#6d9cc4"/><circle cx="6" cy="11" r="2" fill="#e04040"/><circle cx="9" cy="7" r="2" fill="#40a0e0"/><circle cx="14" cy="6.5" r="2" fill="#f0c030"/><circle cx="7" cy="16" r="2" fill="#40c040"/><path d="M14 16L23 2" stroke="#d09040" stroke-width="2"/></svg>
<div class="a" style="left:838px;top:766px;width:40px;height:2px;background:#a4c8e8"></div>
<!-- tray -->
<svg class="a" style="left:1128px;top:736px" width="120" height="24" viewBox="1128 736 120 24">
<path d="M1132 751l6-6 6 6" fill="none" stroke="#fff" stroke-width="1.3"/>
<rect x="1159.5" y="743.5" width="10" height="9" fill="none" stroke="#fff"/><rect x="1160" y="744" width="5" height="8" fill="#fff"/><rect x="1169.5" y="746" width="1.5" height="4" fill="#fff"/><path d="M1155 746h3M1156.5 744v4M1156.5 748v4" stroke="#fff"/>
<path d="M1181 753a12 12 0 0 1 12-12M1184 753a9 9 0 0 1 9-9M1187 753a6 6 0 0 1 6-6M1190 753a3 3 0 0 1 3-3" fill="none" stroke="#fff" stroke-width="1.2"/>
<path d="M1203 745h3l4-4v14l-4-4h-3z" fill="none" stroke="#fff" stroke-width="1.2"/><path d="M1212 745a4 4 0 0 1 0 6M1214.5 743a7 7 0 0 1 0 10" fill="none" stroke="#fff" stroke-width="1.2"/>
<path d="M1227 741h16v11h-6l-2 3-2-3h-6z" fill="#fff"/><path d="M1230 744.5h10M1230 747h10M1230 749.5h7" stroke="#163a61" stroke-width="1"/>
</svg>
<div class="t" style="left:1254px;top:741px;font-size:12px;color:#fff">IND</div>
<div class="t" style="left:1307px;top:733px;font-size:12px;color:#fff">21:22</div>
<div class="t" style="left:1292px;top:750px;font-size:12px;color:#fff">11/10/2016</div>
<div class="a" style="left:1361px;top:728px;width:1px;height:40px;background:#5a7090"></div>
</body></html>
